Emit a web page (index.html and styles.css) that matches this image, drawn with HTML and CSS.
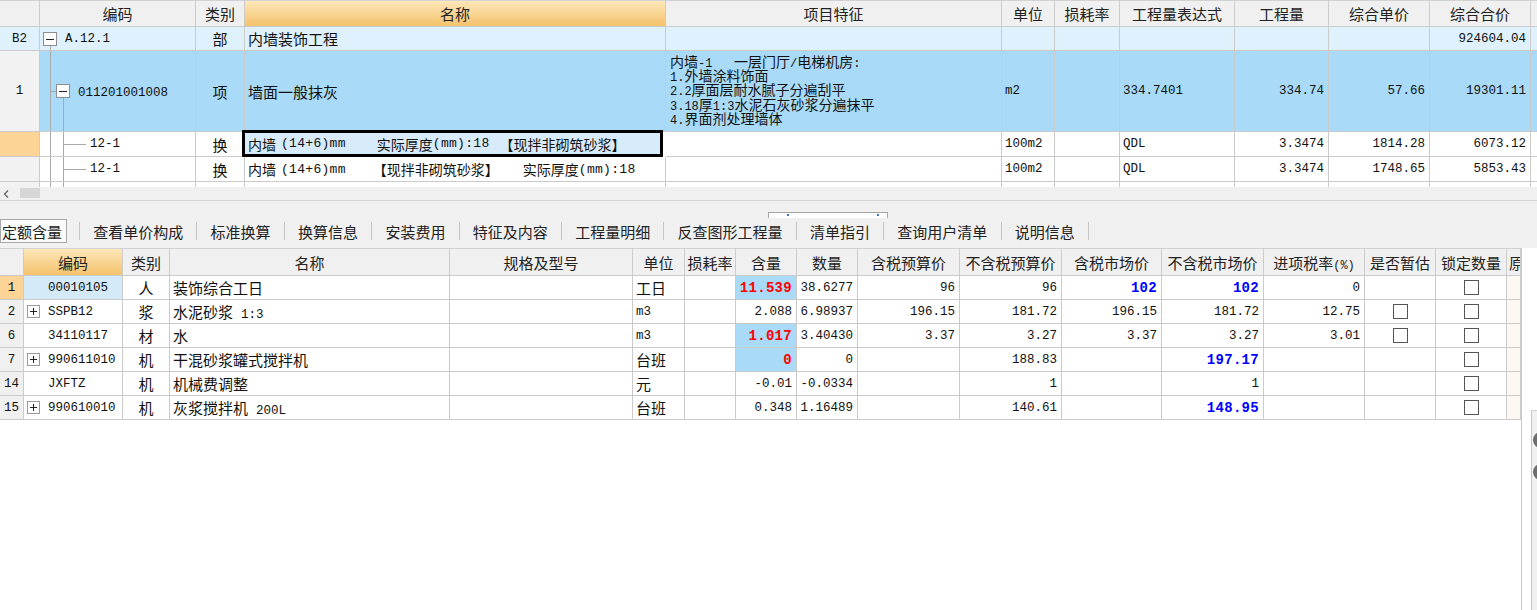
FILE: index.html
```html
<!DOCTYPE html>
<html lang="zh-CN">
<head>
<meta charset="utf-8">
<title>定额含量</title>
<link rel="stylesheet" href="styles.css">
</head>
<body>
<div class="top">
  <div class="tgrid">
    <div class="row hrow">
      <div class="c h"></div>
      <div class="c h">编码</div>
      <div class="c h">类别</div>
      <div class="c h hsel">名称</div>
      <div class="c h">项目特征</div>
      <div class="c h">单位</div>
      <div class="c h">损耗率</div>
      <div class="c h">工程量表达式</div>
      <div class="c h">工程量</div>
      <div class="c h">综合单价</div>
      <div class="c h">综合合价</div>
      <div class="c h nb"></div>
    </div>
    <div class="row b2">
      <div class="c num m">B2</div>
      <div class="c tree">
        <span class="sp" style="width:3px"></span>
        <span class="boxcol"><span class="bt"></span><svg class="box" width="14" height="14" viewBox="0 0 14 14"><rect x="0.5" y="0.5" width="13" height="13" fill="#fff" stroke="#8e8e8e"/><path d="M3 7.5h8" stroke="#222"/></svg><span class="bb"></span></span>
        <span class="tx m">A.12.1</span>
      </div>
      <div class="c ctr">部</div>
      <div class="c">内墙装饰工程</div>
      <div class="c"></div>
      <div class="c"></div>
      <div class="c"></div>
      <div class="c"></div>
      <div class="c"></div>
      <div class="c"></div>
      <div class="c r m">924604.04</div>
      <div class="c nb"></div>
    </div>
    <div class="row r1">
      <div class="c num numg m">1</div>
      <div class="c tree">
        <span class="sp" style="width:10px"></span>
        <span class="vl"></span>
        <span class="conn" style="width:5px"></span>
        <span class="boxcol"><span class="bt"></span><svg class="box" width="14" height="14" viewBox="0 0 14 14"><rect x="0.5" y="0.5" width="13" height="13" fill="#fff" stroke="#8e8e8e"/><path d="M3 7.5h8" stroke="#222"/></svg><span class="bb"></span></span>
        <span class="tx m lo">011201001008</span>
      </div>
      <div class="c ctr">项</div>
      <div class="c">墙面一般抹灰</div>
      <div class="c feat">
        <div class="ftxt">
          <div class="fl">内墙<span class="s">-1   </span>一层门厅<span class="s">/</span>电梯机房<span class="s">:</span></div>
          <div class="fl"><span class="s">1.</span>外墙涂料饰面</div>
          <div class="fl"><span class="s">2.2</span>厚面层耐水腻子分遍刮平</div>
          <div class="fl"><span class="s">3.18</span>厚<span class="s">1:3</span>水泥石灰砂浆分遍抹平</div>
          <div class="fl"><span class="s">4.</span>界面剂处理墙体</div>
        </div>
      </div>
      <div class="c m lo">m2</div>
      <div class="c"></div>
      <div class="c m lo">334.7401</div>
      <div class="c r m lo">334.74</div>
      <div class="c r m lo">57.66</div>
      <div class="c r m lo">19301.11</div>
      <div class="c nb"></div>
    </div>
    <div class="row r2">
      <div class="c num numo"></div>
      <div class="c tree">
        <span class="sp" style="width:10px"></span>
        <span class="vl"></span>
        <span class="sp" style="width:12px"></span>
        <span class="vl"></span>
        <span class="conn" style="width:22px"></span>
        <span class="tx m t4">12-1</span>
      </div>
      <div class="c ctr">换</div>
      <div class="c nm sel"><span>内墙</span><span class="s13" style="margin-left:5px">(14+6)mm</span><span style="margin-left:31px">实际厚度</span><span class="s13">(mm):18</span><span style="margin-left:10px">【现拌非砌筑砂浆】</span></div>
      <div class="c"></div>
      <div class="c m">100m2</div>
      <div class="c"></div>
      <div class="c m">QDL</div>
      <div class="c r m">3.3474</div>
      <div class="c r m">1814.28</div>
      <div class="c r m">6073.12</div>
      <div class="c nb"></div>
    </div>
    <div class="row r3">
      <div class="c num numg"></div>
      <div class="c tree">
        <span class="sp" style="width:10px"></span>
        <span class="vl"></span>
        <span class="sp" style="width:12px"></span>
        <span class="vl"></span>
        <span class="conn" style="width:22px"></span>
        <span class="tx m t4">12-1</span>
      </div>
      <div class="c ctr">换</div>
      <div class="c nm"><span>内墙</span><span class="s13" style="margin-left:5px">(14+6)mm</span><span style="margin-left:27px">【现拌非砌筑砂浆】</span><span style="margin-left:24px">实际厚度</span><span class="s13">(mm):18</span></div>
      <div class="c"></div>
      <div class="c m">100m2</div>
      <div class="c"></div>
      <div class="c m">QDL</div>
      <div class="c r m">3.3474</div>
      <div class="c r m">1748.65</div>
      <div class="c r m">5853.43</div>
      <div class="c nb"></div>
    </div>
    <div class="row r4">
      <div class="c numg"></div>
      <div class="c tree">
        <span class="sp" style="width:10px"></span>
        <span class="vl"></span>
        <span class="sp" style="width:12px"></span>
        <span class="vl"></span>
      </div>
      <div class="c"></div>
      <div class="c"></div>
      <div class="c"></div>
      <div class="c"></div>
      <div class="c"></div>
      <div class="c"></div>
      <div class="c"></div>
      <div class="c"></div>
      <div class="c"></div>
      <div class="c nb"></div>
    </div>
  </div>
  <div class="hscroll">
    <svg class="arrow" width="6" height="8" viewBox="0 0 6 8"><path d="M5 0.5L1.5 4L5 7.5" fill="none" stroke="#606060" stroke-width="1.2"/></svg>
    <span class="thumb"></span>
  </div>
</div>

<div class="splitter"><div class="handle"><span class="dot"></span><span class="dot"></span></div></div>

<div class="tabs">
  <div class="tab act">定额含量</div>
  <span class="sepr"></span>
  <div class="tab">查看单价构成</div>
  <span class="sepr"></span>
  <div class="tab">标准换算</div>
  <span class="sepr"></span>
  <div class="tab">换算信息</div>
  <span class="sepr"></span>
  <div class="tab">安装费用</div>
  <span class="sepr"></span>
  <div class="tab">特征及内容</div>
  <span class="sepr"></span>
  <div class="tab">工程量明细</div>
  <span class="sepr"></span>
  <div class="tab">反查图形工程量</div>
  <span class="sepr"></span>
  <div class="tab">清单指引</div>
  <span class="sepr"></span>
  <div class="tab">查询用户清单</div>
  <span class="sepr"></span>
  <div class="tab">说明信息</div>
  <span class="sepr"></span>
</div>

<div class="lower">
  <div class="lgrid">
    <div class="row hrow">
      <div class="c h"></div>
      <div class="c h hsel">编码</div>
      <div class="c h">类别</div>
      <div class="c h">名称</div>
      <div class="c h">规格及型号</div>
      <div class="c h">单位</div>
      <div class="c h">损耗率</div>
      <div class="c h">含量</div>
      <div class="c h">数量</div>
      <div class="c h">含税预算价</div>
      <div class="c h">不含税预算价</div>
      <div class="c h">含税市场价</div>
      <div class="c h">不含税市场价</div>
      <div class="c h"><span>进项税率<span class="pct">(%)</span></span></div>
      <div class="c h">是否暂估</div>
      <div class="c h">锁定数量</div>
      <div class="c h cut">原材料</div>
    </div>

    <div class="row">
      <div class="c num numo m">1</div>
      <div class="c code csel"><span class="nobox"></span><span class="m">00010105</span></div>
      <div class="c ctr">人</div>
      <div class="c">装饰综合工日</div>
      <div class="c"></div>
      <div class="c">工日</div>
      <div class="c"></div>
      <div class="c r hl"><span class="red">11.539</span></div>
      <div class="c r m">38.6277</div>
      <div class="c r m">96</div>
      <div class="c r m">96</div>
      <div class="c r"><span class="blue">102</span></div>
      <div class="c r"><span class="blue">102</span></div>
      <div class="c r m">0</div>
      <div class="c"></div>
      <div class="c ctr"><span class="cb"></span></div>
      <div class="c cut"></div>
    </div>

    <div class="row">
      <div class="c num m">2</div>
      <div class="c code"><svg class="pbox" width="13" height="13" viewBox="0 0 13 13"><rect x="0.5" y="0.5" width="12" height="12" fill="#fff" stroke="#9a9a9a"/><path d="M3 6.5h7M6.5 3v7" stroke="#222"/></svg><span class="m">SSPB12</span></div>
      <div class="c ctr">浆</div>
      <div class="c"><span>水泥砂浆<span class="m gap">1:3</span></span></div>
      <div class="c"></div>
      <div class="c m">m3</div>
      <div class="c"></div>
      <div class="c r m">2.088</div>
      <div class="c r m">6.98937</div>
      <div class="c r m">196.15</div>
      <div class="c r m">181.72</div>
      <div class="c r m">196.15</div>
      <div class="c r m">181.72</div>
      <div class="c r m">12.75</div>
      <div class="c ctr"><span class="cb"></span></div>
      <div class="c ctr"><span class="cb"></span></div>
      <div class="c cut"></div>
    </div>

    <div class="row">
      <div class="c num m">6</div>
      <div class="c code"><span class="nobox"></span><span class="m">34110117</span></div>
      <div class="c ctr">材</div>
      <div class="c">水</div>
      <div class="c"></div>
      <div class="c m">m3</div>
      <div class="c"></div>
      <div class="c r hl"><span class="red">1.017</span></div>
      <div class="c r m">3.40430</div>
      <div class="c r m">3.37</div>
      <div class="c r m">3.27</div>
      <div class="c r m">3.37</div>
      <div class="c r m">3.27</div>
      <div class="c r m">3.01</div>
      <div class="c ctr"><span class="cb"></span></div>
      <div class="c ctr"><span class="cb"></span></div>
      <div class="c cut"></div>
    </div>

    <div class="row">
      <div class="c num m">7</div>
      <div class="c code"><svg class="pbox" width="13" height="13" viewBox="0 0 13 13"><rect x="0.5" y="0.5" width="12" height="12" fill="#fff" stroke="#9a9a9a"/><path d="M3 6.5h7M6.5 3v7" stroke="#222"/></svg><span class="m">990611010</span></div>
      <div class="c ctr">机</div>
      <div class="c">干混砂浆罐式搅拌机</div>
      <div class="c"></div>
      <div class="c">台班</div>
      <div class="c"></div>
      <div class="c r hl"><span class="red">0</span></div>
      <div class="c r m">0</div>
      <div class="c r m"></div>
      <div class="c r m">188.83</div>
      <div class="c r m"></div>
      <div class="c r"><span class="blue">197.17</span></div>
      <div class="c r m"></div>
      <div class="c"></div>
      <div class="c ctr"><span class="cb"></span></div>
      <div class="c cut"></div>
    </div>

    <div class="row">
      <div class="c num m">14</div>
      <div class="c code"><span class="nobox"></span><span class="m">JXFTZ</span></div>
      <div class="c ctr">机</div>
      <div class="c">机械费调整</div>
      <div class="c"></div>
      <div class="c">元</div>
      <div class="c"></div>
      <div class="c r m">-0.01</div>
      <div class="c r m">-0.0334</div>
      <div class="c r m"></div>
      <div class="c r m">1</div>
      <div class="c r m"></div>
      <div class="c r m">1</div>
      <div class="c r m"></div>
      <div class="c"></div>
      <div class="c ctr"><span class="cb"></span></div>
      <div class="c cut"></div>
    </div>

    <div class="row">
      <div class="c num m">15</div>
      <div class="c code"><svg class="pbox" width="13" height="13" viewBox="0 0 13 13"><rect x="0.5" y="0.5" width="12" height="12" fill="#fff" stroke="#9a9a9a"/><path d="M3 6.5h7M6.5 3v7" stroke="#222"/></svg><span class="m">990610010</span></div>
      <div class="c ctr">机</div>
      <div class="c"><span>灰浆搅拌机<span class="m gap">200L</span></span></div>
      <div class="c"></div>
      <div class="c">台班</div>
      <div class="c"></div>
      <div class="c r m">0.348</div>
      <div class="c r m">1.16489</div>
      <div class="c r m"></div>
      <div class="c r m">140.61</div>
      <div class="c r m"></div>
      <div class="c r"><span class="blue">148.95</span></div>
      <div class="c r m"></div>
      <div class="c"></div>
      <div class="c ctr"><span class="cb"></span></div>
      <div class="c cut"></div>
    </div>
  </div>
  <div class="side">
    <div class="side-top"></div>
    <div class="panel">
      <span class="knob"></span>
      <span class="knob"></span>
    </div>
  </div>
</div>
</body>
</html>
```

FILE: styles.css
```css
* { box-sizing: border-box; }

body {
  margin: 0;
  width: 1537px;
  height: 610px;
  overflow: hidden;
  background: #ffffff;
  font-family: "Noto Sans CJK SC", "Noto Sans", sans-serif;
  font-size: 15px;
  color: #111;
}

.m {
  font-family: "Liberation Mono", "DejaVu Sans Mono", monospace;
  font-size: 12.5px;
}

.lo { padding-top: 3px; }

.gap { margin-left: 8px; }

.s {
  font-family: "Liberation Mono", "DejaVu Sans Mono", monospace;
  font-size: 12px;
  line-height: 1;
  white-space: pre;
}

.s13 {
  font-family: "Liberation Mono", "DejaVu Sans Mono", monospace;
  font-size: 13px;
  letter-spacing: 0.3px;
}

.row { display: contents; }

/* ---------- top grid ---------- */
.tgrid {
  display: grid;
  grid-template-columns: 40px 156px 49px 421px 336px 53px 65px 115px 94px 101px 101px 1fr;
  grid-template-rows: 27px 24px 81px 25px 25px 5px;
}

.c {
  display: flex;
  align-items: center;
  white-space: nowrap;
  overflow: hidden;
  padding: 0 3px;
  border-right: 1px solid #cbcbcb;
  border-bottom: 1px solid #cbcbcb;
}

.c.nb { border-right: none; }

.h {
  justify-content: center;
  background: #f0f0f0;
  border-top: 1px solid #d2d2d2;
  color: #222;
}

.hsel {
  background: linear-gradient(#fde7b9, #f4c26c);
}

.ctr { justify-content: center; }
.r { justify-content: flex-end; padding-right: 4px; }

.num { justify-content: center; background: #f0f0f0; }
.numg { background: #f2f2f2; }
.numo { background: #fcd596; }

.b2 > .c { background: #dff1fc; }
.r1 > .c { background: #a9dbf8; }
.r1 > .numg { background: #f2f2f2; }
.r2 > .c, .r3 > .c { background: #fff; }
.r2 > .numo { background: #fcd596; }
.r3 > .numg, .r4 > .numg { background: #f2f2f2; }
.r4 > .c { border-bottom: none; }

.tree {
  padding: 0;
  align-items: stretch;
}

.sp { flex: none; }

.vl {
  flex: none;
  width: 1px;
  background: #a9a9a9;
}

.conn {
  flex: none;
  display: flex;
  align-items: center;
}

.conn::before {
  content: "";
  display: block;
  width: 100%;
  height: 1px;
  background: #a9a9a9;
}

.boxcol {
  flex: none;
  width: 14px;
  display: flex;
  flex-direction: column;
}

.boxcol .bt, .boxcol .bb { flex: 1; }

.boxcol .bb::before {
  content: "";
  display: block;
  width: 1px;
  height: 100%;
  margin-left: 7px;
  background: #a9a9a9;
}

.box { display: block; flex: none; }

.tx {
  align-self: center;
  margin-left: 8px;
}

.tx.t4 { margin-left: 4px; }

.feat { padding: 0 4px; }

.ftxt {
  font-size: 14px;
  margin-top: -3px;
}

.fl {
  height: 14.3px;
  line-height: 14.3px;
  white-space: nowrap;
  overflow: visible;
}

.nm { font-size: 14px; }

.sel {
  background: #d7ebfa !important;
  border: 3px solid #000;
  margin: -2px 3px 0 -3px;
  padding-left: 3px;
}

/* horizontal scrollbar */
.hscroll {
  height: 14px;
  background: #f0f0f0;
  border-bottom: 1px solid #d4d4d4;
  display: flex;
  align-items: flex-start;
}

.arrow {
  display: block;
  margin: 3px 0 0 3px;
}

.thumb {
  display: block;
  width: 20px;
  height: 10px;
  margin: 1px 0 0 11px;
  background: #d6d6d6;
}

/* splitter */
.splitter {
  height: 17px;
  background: #f0f0f0;
  padding-top: 11px;
}

.handle {
  margin-left: 768px;
  width: 120px;
  height: 6px;
  background: #fff;
  border: 1px solid #a5a5a5;
  border-bottom: none;
  display: flex;
  justify-content: space-between;
  padding: 1px 8px 0 18px;
}

.dot {
  display: block;
  width: 2px;
  height: 2px;
  background: #3d6fcf;
}

/* tabs */
.tabs {
  height: 30px;
  background: #f0f0f0;
  display: flex;
  align-items: flex-start;
  padding-top: 1px;
}

.tab {
  height: 24px;
  display: flex;
  align-items: center;
  padding: 0 13.2px;
  color: #222;
  white-space: nowrap;
}

.tab.act {
  padding: 0 4px 0 1px;
  margin-right: 12px;
  background: #fafafa;
  border: 1px solid #a8a8a8;
}

.sepr {
  display: block;
  width: 1px;
  height: 18px;
  margin-top: 3px;
  background: #c4c4c4;
}

/* lower grid */
.lower {
  display: flex;
  height: 362px;
}

.lgrid {
  flex: none;
  width: 1521px;
  display: grid;
  grid-template-columns: 24px 99px 47px 280px 183px 52px 51px 61px 61px 102px 102px 100px 102px 101px 71px 71px 14px;
  grid-template-rows: 28px repeat(6, 24px);
  align-content: start;
}

.pct {
  font-family: "Liberation Mono", monospace;
  font-size: 12px;
}

.cut {
  justify-content: flex-start;
  padding: 0 0 0 2px;
  background: #fdf9f2;
}

.h.cut { background: #f0f0f0; justify-content: flex-start; }

.code { padding: 0 0 0 3px; }

.pbox, .nobox {
  display: block;
  flex: none;
  width: 13px;
  height: 13px;
  margin-right: 8px;
}

.csel { background: #d5eaf9; }

.hl { background: #a9dbf8; }

.red {
  color: #ff0000;
  font-weight: bold;
  font-family: "Liberation Mono", monospace;
  font-size: 14px;
  letter-spacing: 0.3px;
}

.blue {
  color: #0000ff;
  font-weight: bold;
  font-family: "Liberation Mono", monospace;
  font-size: 14px;
  letter-spacing: 0.3px;
}

.cb {
  display: block;
  width: 15px;
  height: 15px;
  border: 1px solid #555;
  background: #fff;
}

/* right strip */
.side {
  flex: 1;
  border-left: 1px solid #c9c9c9;
  display: flex;
  flex-direction: column;
  align-items: flex-end;
}

.side-top {
  height: 162px;
  flex: none;
}

.panel {
  flex: 1;
  width: 6px;
  background: #f1f1f1;
  border-left: 1px solid #c6c6c6;
  border-top: 1px solid #d4d4d4;
  overflow: hidden;
  padding-top: 21px;
  display: flex;
  flex-direction: column;
  gap: 16px;
}

.knob {
  display: block;
  flex: none;
  width: 16px;
  height: 16px;
  margin-left: 1px;
  border-radius: 50%;
  background: #6e6e6e;
}
```
